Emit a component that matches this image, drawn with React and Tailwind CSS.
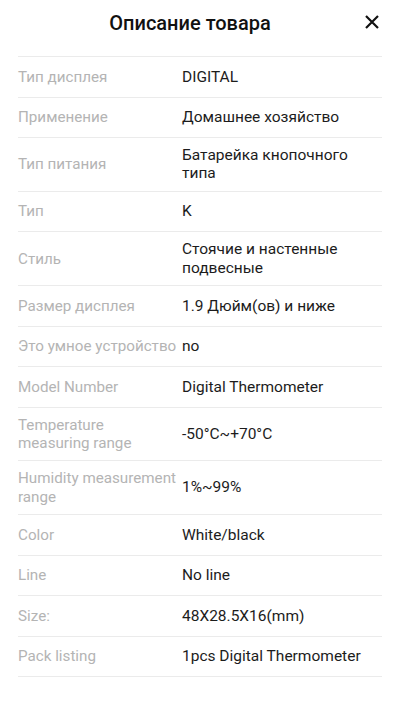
import React from "react";

const specs = [
  ["Тип дисплея", "DIGITAL"],
  ["Применение", "Домашнее хозяйство"],
  ["Тип питания", "Батарейка кнопочного типа"],
  ["Тип", "K"],
  ["Стиль", "Стоячие и настенные подвесные"],
  ["Размер дисплея", "1.9 Дюйм(ов) и ниже"],
  ["Это умное устройство", "no"],
  ["Model Number", "Digital Thermometer"],
  ["Temperature measuring range", "-50°C~+70°C"],
  ["Humidity measurement range", "1%~99%"],
  ["Color", "White/black"],
  ["Line", "No line"],
  ["Size:", "48X28.5X16(mm)"],
  ["Pack listing", "1pcs Digital Thermometer"],
];

const App = () => {
  return (
    <div className="w-[400px] h-[715px] bg-white font-['Roboto',sans-serif] overflow-hidden">
      {/* header */}
      <div className="h-[56px] flex items-start pt-[11px] px-[18px]">
        <div className="flex-1 text-center text-[20px] leading-[24px] font-medium text-[#111]">
          Описание товара
        </div>
        <button className="w-[20px] h-[22px] flex items-center justify-center">
          <svg width="14" height="14" viewBox="0 0 14 14">
            <path d="M1 1L13 13M13 1L1 13" stroke="#111" strokeWidth="2.2" />
          </svg>
        </button>
      </div>

      {/* spec list */}
      <div className="mx-[18px] border-t border-[#ebebeb]">
        {specs.map(([label, value]) => (
          <div
            key={label}
            className="flex items-center min-h-[40.6px] py-[8px] border-b border-[#ebebeb] leading-[18.3px]"
          >
            <div className="w-[159px] mr-[5px] shrink-0 text-[15.2px] text-[#b4b4b4]">{label}</div>
            <div className="flex-1 text-[15.5px] text-[#1c1c1c]">{value}</div>
          </div>
        ))}
      </div>
    </div>
  );
};

export default App;
